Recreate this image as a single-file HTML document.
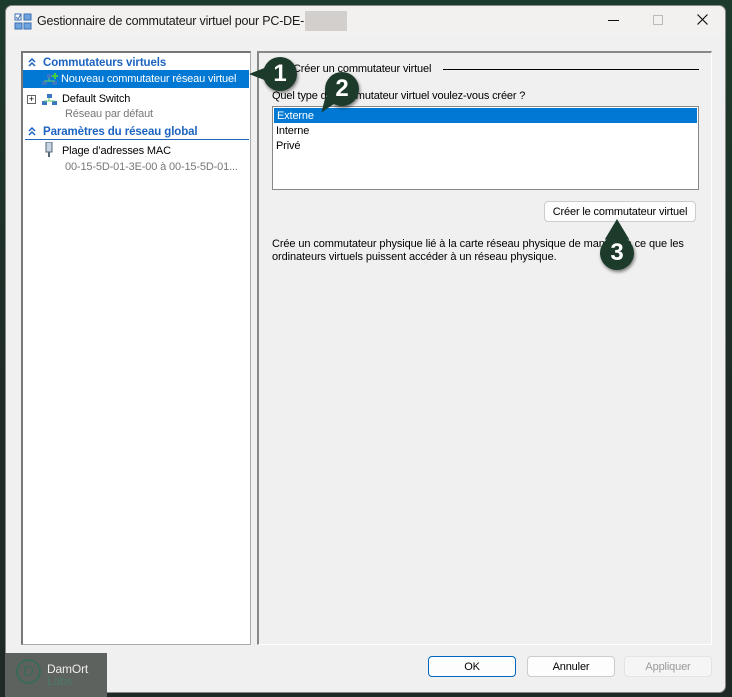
<!DOCTYPE html>
<html><head><meta charset="utf-8"><style>
*{margin:0;padding:0;box-sizing:border-box}
body{width:732px;height:697px;background:#1f2a27;font-family:"Liberation Sans",sans-serif;font-size:11px;letter-spacing:-0.15px;line-height:16px;color:#000;position:relative;overflow:hidden}
.bgtop{position:absolute;left:0;top:0;width:732px;height:400px;background:linear-gradient(#1d3b2c,#1f2a27)}
.win{position:absolute;left:5px;top:5px;width:721px;height:688px;background:#f0f0f0;border:1px solid #888;border-radius:7px;overflow:hidden}
.title{position:absolute;left:0;top:0;width:100%;height:30px;background:#f3f1ef}
.title .t{position:absolute;left:31px;top:7px;font-size:12.5px;letter-spacing:-0.2px;color:#1a1a1a;white-space:nowrap}
.blur{position:absolute;left:299px;top:5px;width:42px;height:20px;background:#d2cfcc}
.abs{position:absolute;white-space:nowrap}
.left{position:absolute;left:15px;top:45px;width:230px;height:594px;background:#fff;border:1px solid #aaa;border-top:2px solid #777;border-left:2px solid #777}
.right{position:absolute;left:251px;top:45px;width:455px;height:594px;border:1px solid #fff;border-top:2px solid #888;border-left:2px solid #888}
.hdr{position:absolute;left:2px;width:224px;color:#1c64c0;font-weight:bold;font-size:11.5px;border-bottom:1px solid #1c64c0;height:17px;padding-left:18px;padding-top:1px;white-space:nowrap;letter-spacing:-0.1px}
.sel{position:absolute;left:0;top:17px;width:226px;height:18px;background:#0078d4;color:#fff;padding:1px 0 0 38px;white-space:nowrap}
.btn{position:absolute;height:21px;background:#fdfdfd;border:1px solid #ccc;border-radius:4px;text-align:center;line-height:20px;white-space:nowrap}
.badge{position:absolute;width:34px;height:34px;border-radius:50%;background:#1c3b2b;color:#fff;font-weight:bold;font-size:24px;letter-spacing:0;text-align:center;line-height:34px;box-shadow:1px 2px 3px rgba(0,0,0,.5)}
</style></head><body>
<div class="bgtop"></div>
<div class="win">
 <div class="title">
  <svg class="abs" style="left:8px;top:7px" width="18" height="17"><rect x="1" y="1" width="6" height="6" fill="#fff" stroke="#3a6fb5"/><path d="M2 4l2 2 3-5" stroke="#3a6fb5" fill="none"/><rect x="10" y="1" width="7" height="6" fill="#6fa3de" stroke="#3a6fb5"/><rect x="1" y="10" width="7" height="6" fill="#6fa3de" stroke="#3a6fb5"/><rect x="10" y="10" width="7" height="6" fill="#6fa3de" stroke="#3a6fb5"/></svg>
  <div class="t">Gestionnaire de commutateur virtuel pour PC-DE-</div>
  <div class="blur"></div>
  <div class="abs" style="left:602px;top:14px;width:11px;height:1px;background:#111"></div>
  <div class="abs" style="left:647px;top:9px;width:10px;height:10px;border:1px solid #bbb"></div>
  <svg class="abs" style="left:691px;top:8px" width="11" height="11"><path d="M0.5 0.5l10 10M10.5 0.5l-10 10" stroke="#111" stroke-width="1.2"/></svg>
 </div>
 <div class="left">
  <div class="hdr" style="top:1px"><svg class="abs" style="left:3px;top:4px" width="8" height="9"><path d="M1 4l3-3 3 3M1 8l3-3 3 3" stroke="#1c64c0" stroke-width="1.5" fill="none"/></svg>Commutateurs virtuels</div>
  <div class="sel">Nouveau commutateur réseau virtuel</div>
  <svg class="abs" style="left:19px;top:20px" width="16" height="13"><rect x="5" y="1" width="5" height="4" fill="#3a76c4"/><rect x="0" y="8" width="5" height="4" fill="#3a76c4"/><rect x="10" y="8" width="5" height="4" fill="#3a76c4"/><path d="M7 5v3M2 8h11" stroke="#6c6"/><path d="M13 0v6M10 3h6" stroke="#4c4" stroke-width="2"/></svg>
  <div class="abs" style="left:4px;top:42px;width:9px;height:9px;border:1px solid #666;font-size:9px;line-height:7px;text-align:center;letter-spacing:0">+</div>
  <svg class="abs" style="left:19px;top:40px" width="16" height="13"><rect x="5" y="1" width="5" height="4" fill="#3a76c4"/><rect x="0" y="8" width="5" height="4" fill="#3a76c4"/><rect x="10" y="8" width="5" height="4" fill="#3a76c4"/><path d="M7 5v3M2 8h11" stroke="#6c6"/></svg>
  <div class="abs" style="left:39px;top:38px">Default Switch</div>
  <div class="abs" style="left:42px;top:53px;color:#777">Réseau par défaut</div>
  <div class="hdr" style="top:70px"><svg class="abs" style="left:3px;top:4px" width="8" height="9"><path d="M1 4l3-3 3 3M1 8l3-3 3 3" stroke="#1c64c0" stroke-width="1.5" fill="none"/></svg>Paramètres du réseau global</div>
  <svg class="abs" style="left:22px;top:89px" width="9" height="16"><rect x="1" y="0" width="6" height="10" fill="#c8d4e2" stroke="#567"/><rect x="3" y="10" width="2" height="5" fill="#567"/></svg>
  <div class="abs" style="left:39px;top:90px">Plage d’adresses MAC</div>
  <div class="abs" style="left:42px;top:106px;color:#777">00-15-5D-01-3E-00 à 00-15-5D-01...</div>
 </div>
 <div class="right">
  <div class="abs" style="left:34px;top:8px">Créer un commutateur virtuel</div>
  <div class="abs" style="left:184px;top:16px;width:256px;height:1px;background:#000"></div>
  <div class="abs" style="left:13px;top:35px">Quel type de commutateur virtuel voulez-vous créer ?</div>
  <div class="abs" style="left:13px;top:53px;width:427px;height:84px;background:#fff;border:1px solid #888">
   <div style="margin:1px;height:15px;background:#0078d4;color:#fff;padding:0 3px;line-height:16px">Externe</div>
   <div style="padding:0 3px;line-height:15px">Interne<br>Privé</div>
  </div>
  <div class="btn" style="left:285px;top:148px;width:152px">Créer le commutateur virtuel</div>
  <div class="abs" style="left:13px;top:185px;line-height:13px;letter-spacing:-0.1px">Crée un commutateur physique lié à la carte réseau physique de manière à ce que les<br>ordinateurs virtuels puissent accéder à un réseau physique.</div>
 </div>
 <div class="btn" style="left:422px;top:650px;width:88px;border-color:#0067c0">OK</div>
 <div class="btn" style="left:521px;top:650px;width:88px">Annuler</div>
 <div class="btn" style="left:618px;top:650px;width:88px;color:#999;background:#f5f5f5;border-color:#e3e3e3">Appliquer</div>
</div>
<div class="abs" style="left:5px;top:653px;width:102px;height:44px;background:#5e625f">
 <div class="abs" style="left:11px;top:6px;width:25px;height:25px;border:2px solid #3a6b55;border-radius:50%;color:#3a6b55;text-align:center;line-height:21px;font-size:15px">D</div>
 <div class="abs" style="left:42px;top:8px;color:#eee;font-size:12px">DamOrt</div>
 <div class="abs" style="left:42px;top:20px;color:#4a7a63;font-size:12px">Labs</div>
</div>
<div class="badge" style="left:263px;top:57px">1</div>
<div class="abs" style="left:249px;top:67px;width:0;height:0;border-top:7px solid transparent;border-bottom:7px solid transparent;border-right:18px solid #1c3b2b"></div>
<div class="badge" style="left:325px;top:72px">2</div>
<div class="abs" style="left:320px;top:98px;width:0;height:0;border-left:6px solid transparent;border-right:6px solid transparent;border-top:16px solid #1c3b2b;transform:rotate(35deg)"></div>
<div class="badge" style="left:600px;top:236px">3</div>
<div class="abs" style="left:605px;top:219px;width:0;height:0;border-left:12px solid transparent;border-right:12px solid transparent;border-bottom:20px solid #1c3b2b"></div>
</body></html>
